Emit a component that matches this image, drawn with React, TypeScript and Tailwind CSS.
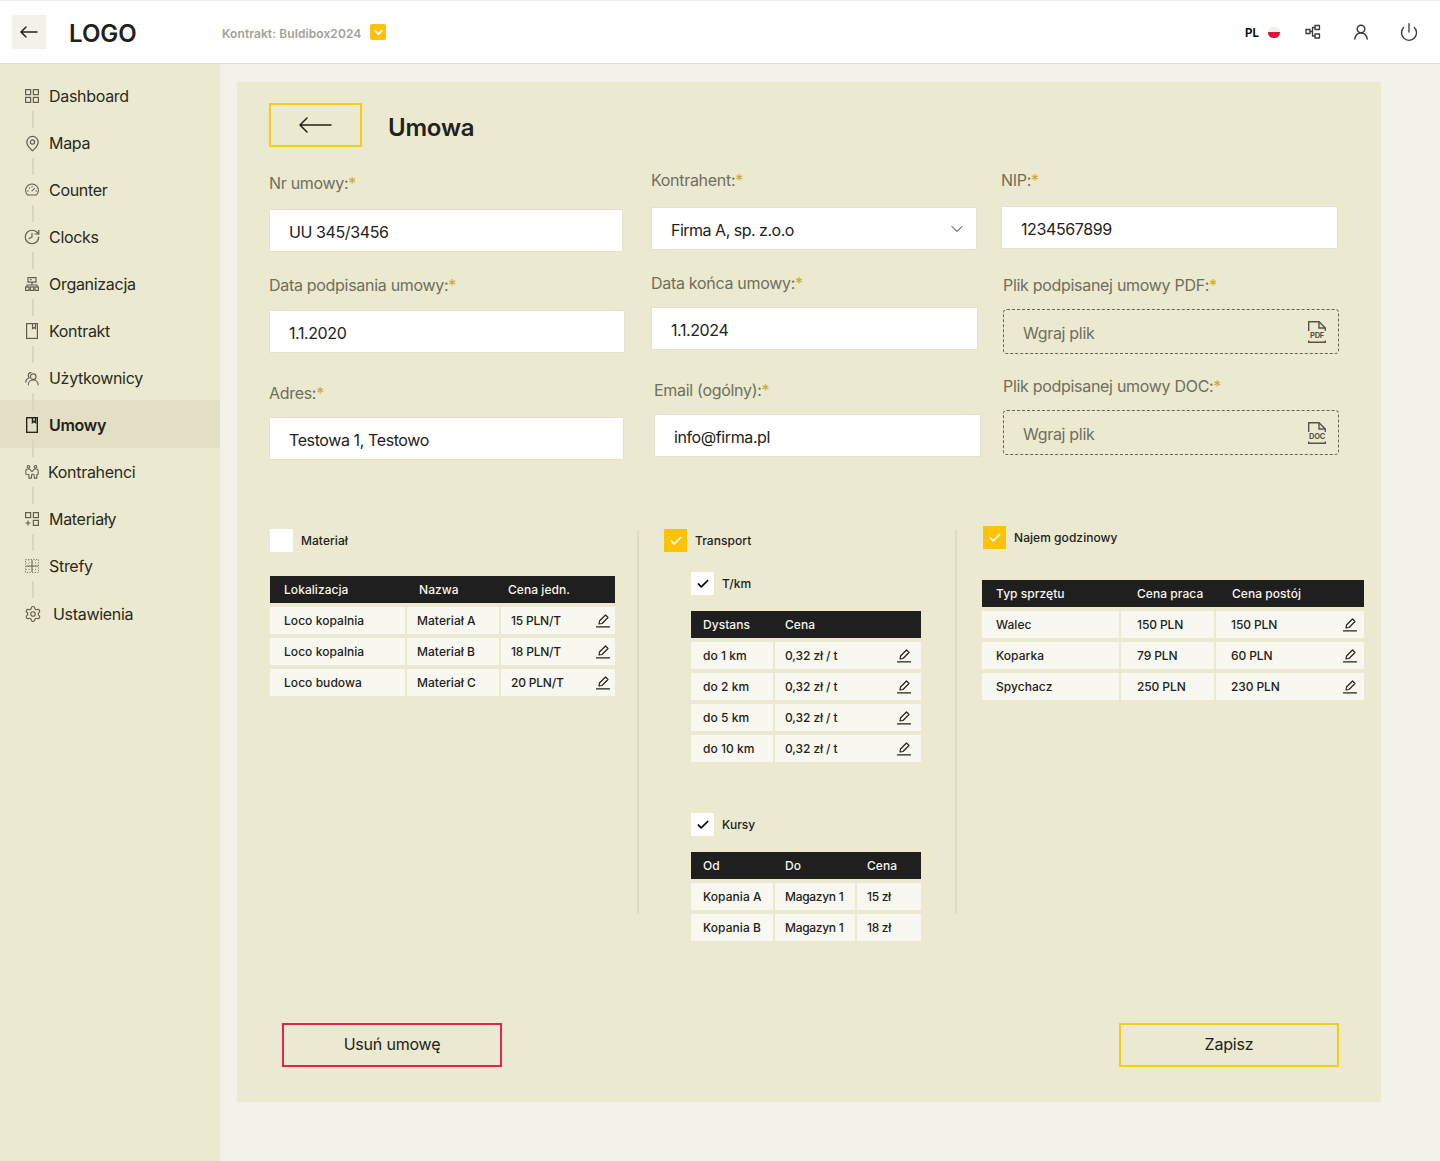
import { ChevronDown, Check, MapPin, History, Settings, Power } from "lucide-react";
import type { ReactNode } from "react";

const iconProps = {
  fill: "none",
  stroke: "currentColor",
  strokeWidth: 1.2,
  strokeLinecap: "round" as const,
  strokeLinejoin: "round" as const,
};

function DashIcon() {
  return (
    <svg width="14" height="14" viewBox="0 0 14 14" {...iconProps} strokeLinecap="butt" strokeLinejoin="miter">
      <rect x="0.6" y="0.6" width="5" height="5" />
      <rect x="8.4" y="0.6" width="5" height="5" />
      <rect x="0.6" y="8.4" width="5" height="5" />
      <rect x="8.4" y="8.4" width="5" height="5" />
    </svg>
  );
}

function GaugeIcon() {
  return (
    <svg width="16" height="14" viewBox="0 0 16 14" {...iconProps}>
      <path d="M3 12.800A7.300 7.300 0 1 1 13 12.800Z" />
      <path d="M8 8l3-3M3 8h.5M12.500 8h.5M5 4.500l.3.3M8 3v.5" />
    </svg>
  );
}

function OrgIcon() {
  return (
    <svg width="14" height="14" viewBox="0 0 14 14" {...iconProps} strokeLinecap="butt" strokeLinejoin="miter">
      <rect x="3" y="0.6" width="8" height="4.500" />
      <path d="M5 2.600h1.500M7 5v3M2 10V8h10v2" />
      <rect x="0.6" y="10" width="3.400" height="3.400" />
      <rect x="5.300" y="10" width="3.400" height="3.400" />
      <rect x="10" y="10" width="3.400" height="3.400" />
    </svg>
  );
}

function BookIcon({ bold = false }: { bold?: boolean }) {
  return (
    <svg width="12" height="16" viewBox="0 0 12 16" {...iconProps} strokeWidth={bold ? 1.500 : 1.200} strokeLinecap="butt" strokeLinejoin="miter">
      <rect x="0.6" y="0.6" width="10.800" height="14.800" />
      <path d="M6.500 0.6V5.500L8 4.400 9.500 5.500V0.6" />
    </svg>
  );
}

function UsersIcon() {
  return (
    <svg width="15" height="15" viewBox="0 0 15 15" {...iconProps}>
      <circle cx="8.800" cy="5.500" r="3" />
      <path d="M3.500 14.300c0-3 2.200-5.300 5.300-5.300s5.300 2.300 5.300 5.300" />
      <path d="M6.500 1.200A3 3 0 0 0 3.500 4.200c0 1 .4 1.800 1 2.400C2.500 7.500.8 9.500.8 11.500" />
    </svg>
  );
}

function PartnersIcon() {
  return (
    <svg width="16" height="16" viewBox="0 0 16 16" {...iconProps}>
      <circle cx="4" cy="2" r="1.500" />
      <circle cx="12" cy="2" r="1.500" />
      <path d="M1 6c0-.9.6-1.500 2-1.500h2l3 3 3-3h2c1.400 0 2 .6 2 1.500v4.500l-1.500.4V15h-2.800l-.4-4L8 10.200 7.700 11l-.4 4H4.500v-4.100L1 10.500Z" />
    </svg>
  );
}

function MaterialsIcon() {
  return (
    <svg width="14" height="14" viewBox="0 0 14 14" {...iconProps} strokeLinecap="butt" strokeLinejoin="miter">
      <rect x="0.6" y="0.6" width="5" height="5" />
      <rect x="8.400" y="0.6" width="5" height="5" />
      <rect x="8.400" y="8.400" width="5" height="5" />
      <path d="M3 8.400v5M0.500 11h5" />
    </svg>
  );
}

function ZonesIcon() {
  return (
    <svg width="14" height="14" viewBox="0 0 14 14" fill="none" stroke="currentColor" strokeWidth="1">
      <rect x="0.5" y="0.5" width="13" height="13" strokeDasharray="1.300 1.300" opacity="0.75" />
      <path d="M7 1v12M1 7h12" />
      <path d="M3.500 1v12M10.500 1v12M1 3.500h12M1 10.500h12" strokeDasharray="1 2" opacity="0.45" />
    </svg>
  );
}

function NetIcon() {
  return (
    <svg width="16" height="16" viewBox="0 0 16 16" {...iconProps} strokeWidth={1.300}>
      <rect x="1" y="5.500" width="4" height="4" />
      <rect x="10" y="1.500" width="4.500" height="4" />
      <rect x="10" y="10" width="4.500" height="4" />
      <path d="M5 7.500h2.500M7.500 3.500V12M7.500 3.500H10M7.500 12H10" />
    </svg>
  );
}

function UserIcon() {
  return (
    <svg width="16" height="16" viewBox="0 0 16 16" {...iconProps} strokeWidth={1.500}>
      <circle cx="8" cy="5" r="3.800" />
      <path d="M1.800 15c.5-3.500 3-6 6.200-6s5.700 2.500 6.200 6" />
    </svg>
  );
}

function PencilIcon() {
  return (
    <svg width="14" height="14" viewBox="0 0 14 14" {...iconProps} strokeWidth={1.200}>
      <path d="M3 10l.5-3L9.500 1l2.500 2.500-6 6Z" />
      <path d="M0.500 12.800h13" />
    </svg>
  );
}

function FileTypeIcon({ label }: { label: string }) {
  return (
    <svg width="18" height="22" viewBox="0 0 18 22" fill="none" stroke="#54544a" strokeWidth="1.400">
      <path d="M0.700 10V0.700H11L17.300 7V10" />
      <path d="M11 0.700V7H17.300" />
      <path d="M0.700 19.500V21.300H17.300V19.500" />
      <text x="9" y="16.500" textAnchor="middle" fontSize="7.500" fontWeight="700" fill="#54544a" stroke="none">
        {label}
      </text>
    </svg>
  );
}

function Connector() {
  return <div className="relative z-10 ml-[32px] h-[17px] w-[2px] bg-[#d8d6bd]" />;
}

function NavItem({ icon, label, textCls = "ml-[10px]" }: { icon: ReactNode; label: string; textCls?: string }) {
  return (
    <div className="flex h-[30px] items-center pl-[25px] text-[16px] leading-none tracking-[-0.3px] text-[#2a2a22]">
      <span className="flex w-[14px] shrink-0 items-center justify-center text-[#5f5f50]">{icon}</span>
      <span className={textCls}>{label}</span>
    </div>
  );
}

function Sidebar() {
  return (
    <aside className="w-[220px] shrink-0 bg-[#ebe9d0] pt-[17px]">
      <NavItem icon={<DashIcon />} label="Dashboard" />
      <Connector />
      <NavItem icon={<MapPin size={17} strokeWidth={1.700} className="shrink-0" />} label="Mapa" />
      <Connector />
      <NavItem icon={<GaugeIcon />} label="Counter" />
      <Connector />
      <NavItem icon={<History size={18} strokeWidth={1.600} className="shrink-0 -scale-x-100" />} label="Clocks" />
      <Connector />
      <NavItem icon={<OrgIcon />} label="Organizacja" />
      <Connector />
      <NavItem icon={<BookIcon />} label="Kontrakt" />
      <Connector />
      <NavItem icon={<UsersIcon />} label="Użytkownicy" />
      <Connector />
      <div className="-mt-[10px] -mb-[8px] flex h-[48px] items-center bg-[#e2dfc5] pt-[2px] pl-[26px] text-[16px] leading-none font-semibold tracking-[-0.3px] text-[#22221b]">
        <span className="flex w-[12px] justify-center text-[#22221b]">
          <BookIcon bold />
        </span>
        <span className="ml-[11px]">Umowy</span>
      </div>
      <Connector />
      <NavItem icon={<PartnersIcon />} label="Kontrahenci" textCls="ml-[9px]" />
      <Connector />
      <NavItem icon={<MaterialsIcon />} label="Materiały" />
      <Connector />
      <NavItem icon={<ZonesIcon />} label="Strefy" />
      <Connector />
      <div className="mt-[1px] flex h-[30px] items-center pl-[25px] text-[16px] leading-none tracking-[-0.3px] text-[#2a2a22]">
        <span className="flex w-[16px] justify-center text-[#5f5f50]">
          <Settings size={18} strokeWidth={1.500} className="shrink-0" />
        </span>
        <span className="ml-[12px]">Ustawienia</span>
      </div>
    </aside>
  );
}

function TopBar() {
  return (
    <header className="flex h-[64px] items-center border-t border-b border-t-[#f0f0ea] border-b-[#dededa] bg-white pl-[12px]">
      <div className="flex h-[34px] w-[34px] items-center justify-center bg-[#f2f2ea] text-[#22221b]">
        <svg width="18" height="12" viewBox="0 0 18 12" {...iconProps} strokeWidth={1.500}>
          <path d="M17 6H1M6 1 1 6l5 5" />
        </svg>
      </div>
      <div className="ml-[23px] w-[153px] pt-[3px] text-[24px] leading-none font-semibold text-[#22221b]">LOGO</div>
      <div className="pt-[3px] text-[12px] leading-none font-semibold tracking-[0.09px] text-[#a3a296]">Kontrakt: Buldibox2024</div>
      <div className="ml-[9px] flex h-[16px] w-[16px] items-center justify-center rounded-[2px] bg-[#ffc20a] text-white">
        <ChevronDown size={13} strokeWidth={3.500} />
      </div>
      <div className="ml-auto flex items-center pr-[21px] text-[#3a3a3a]">
        <span className="pt-[3px] text-[11.500px] leading-none font-bold text-[#111]">PL</span>
        <div className="ml-[9px] h-[11px] w-[12px] overflow-hidden rounded-full bg-[#eeeeea]">
          <div className="mt-[5px] h-[6px] bg-[#dc143c]" />
        </div>
        <span className="ml-[25px] flex">
          <NetIcon />
        </span>
        <span className="ml-[32px] flex">
          <UserIcon />
        </span>
        <span className="ml-[30px] flex">
          <Power size={20} strokeWidth={1.600} />
        </span>
      </div>
    </header>
  );
}

function Label({ text, className = "" }: { text: string; className?: string }) {
  return (
    <div className={`h-[24px] text-[16px] leading-[24px] tracking-[-0.3px] text-[#6f6f5d] ${className}`}>
      {text}
      <span className="text-[#c9a92a]">*</span>
    </div>
  );
}

function TextBox({ value, className = "" }: { value: string; className?: string }) {
  return (
    <input
      readOnly
      value={value}
      className={`block h-[43px] border border-[#e4e2cf] bg-white px-[19px] pt-[2px] text-[16px] tracking-[-0.4px] text-[#22221b] outline-none ${className}`}
    />
  );
}

function Upload({ kind, className = "" }: { kind: string; className?: string }) {
  return (
    <div
      className={`flex h-[45px] w-[336px] items-center justify-between rounded-[4px] border border-dashed border-[#66665a] pr-[12px] pl-[19px] text-[16px] tracking-[-0.3px] text-[#6f6f5d] ${className}`}
    >
      <span className="pt-[2px]">Wgraj plik</span>
      <FileTypeIcon label={kind} />
    </div>
  );
}

type Cell = { text: string; cls?: string };

function DataTable({
  gridCls,
  head,
  rows,
  editCls = "",
}: {
  gridCls: string;
  head: Cell[];
  rows: Cell[][];
  editCls?: string;
}) {
  return (
    <div className="flex flex-col gap-[4px] text-[12px] leading-none font-medium tracking-[0.05px] text-[#22221b]">
      <div className={`grid h-[27px] items-center bg-[#1f1f1f] pt-[1px] text-[#f7f6ee] ${gridCls}`}>
        {head.map((c) => (
          <div key={c.text} className={c.cls}>
            {c.text}
          </div>
        ))}
      </div>
      {rows.map((row) => (
        <div key={row.map((c) => c.text).join("-")} className={`grid h-[27px] ${gridCls}`}>
          {row.map((c, i) => (
            <div key={i} className={`flex items-center justify-between bg-[#f9f8f0] ${c.cls ?? ""}`}>
              <span className="pt-[1px]">{c.text}</span>
              {i === row.length - 1 && editCls && (
                <span className={`flex ${editCls}`}>
                  <PencilIcon />
                </span>
              )}
            </div>
          ))}
        </div>
      ))}
    </div>
  );
}

function CheckBox({ state, label, className = "" }: { state: "off" | "yellow" | "white"; label: string; className?: string }) {
  return (
    <div className={`flex items-center gap-[8px] text-[12px] leading-none font-medium tracking-[0.05px] text-[#22221b] ${className}`}>
      {state === "yellow" && (
        <div className="flex h-[23px] w-[23px] items-center justify-center bg-[#ffc20a] text-white">
          <Check size={14} strokeWidth={3} />
        </div>
      )}
      {state === "white" && (
        <div className="flex h-[23px] w-[23px] items-center justify-center bg-white text-black">
          <Check size={14} strokeWidth={3} />
        </div>
      )}
      {state === "off" && <div className="h-[23px] w-[23px] bg-white" />}
      <span className="pt-[1px]">{label}</span>
    </div>
  );
}

const Divider = () => <div className="mt-[4px] h-[384px] w-[2px] shrink-0 bg-[#dedcc3]" />;

export default function App() {
  return (
    <div className="flex min-h-[1161px] flex-col bg-[#f2f2ea] font-[Inter,sans-serif]">
      <TopBar />
      <div className="flex flex-1">
        <Sidebar />
        <main className="pt-[18px] pl-[17px]">
          <div className="w-[1144px] bg-[#ebe9d0] pt-[21px] pr-[32px] pb-[35px] pl-[32px]">
            <div className="flex items-center">
              <div className="flex h-[44px] w-[93px] items-center justify-center border-2 border-[#f5cc16] text-[#22221b]">
                <svg width="33" height="16" viewBox="0 0 33 16" {...iconProps} strokeWidth={1.500} className="-ml-[1px]">
                  <path d="M32 8H1M8 1 1 8l7 7" />
                </svg>
              </div>
              <h1 className="ml-[26px] pt-[5px] text-[24px] leading-none font-semibold tracking-[-0.2px] text-[#22221b]">Umowa</h1>
            </div>

            <div className="flex">
              <div className="w-[382px]">
                <Label text="Nr umowy:" className="mt-[24px]" />
                <TextBox value="UU 345/3456" className="mt-[14px] w-[354px]" />
                <Label text="Data podpisania umowy:" className="mt-[21px]" />
                <TextBox value="1.1.2020" className="mt-[13px] w-[356px]" />
                <Label text="Adres:" className="mt-[28px]" />
                <TextBox value="Testowa 1, Testowo" className="mt-[12px] w-[355px]" />
              </div>
              <div className="w-[350px]">
                <Label text="Kontrahent:" className="mt-[21px]" />
                <div className="mt-[15px] flex h-[43px] w-[326px] items-center justify-between border border-[#e4e2cf] bg-white pr-[9px] pl-[19px] text-[16px] tracking-[-0.5px] text-[#22221b]">
                  <span className="pt-[2px]">Firma A, sp. z.o.o</span>
                  <ChevronDown size={20} strokeWidth={1.200} />
                </div>
                <Label text="Data końca umowy:" className="mt-[21px]" />
                <TextBox value="1.1.2024" className="mt-[12px] w-[327px]" />
                <Label text="Email (ogólny):" className="mt-[28px] ml-[3px]" />
                <TextBox value="info@firma.pl" className="mt-[12px] ml-[3px] w-[327px]" />
              </div>
              <div>
                <Label text="NIP:" className="mt-[21px]" />
                <TextBox value="1234567899" className="mt-[14px] w-[337px]" />
                <Label text="Plik podpisanej umowy PDF:" className="mt-[24px] ml-[2px]" />
                <Upload kind="PDF" className="mt-[12px] ml-[2px]" />
                <Label text="Plik podpisanej umowy DOC:" className="mt-[20px] ml-[2px]" />
                <Upload kind="DOC" className="mt-[12px] ml-[2px]" />
              </div>
            </div>

            <div className="mt-[66px] flex items-start">
              <div className="w-[368px] shrink-0 pt-[3px] pl-[1px]">
                <CheckBox state="off" label="Materiał" />
                <div className="mt-[24px] w-[345px]">
                  <DataTable
                    gridCls="grid-cols-[135px_92px_114px] gap-x-[2px]"
                    editCls="mr-[5px]"
                    head={[
                      { text: "Lokalizacja", cls: "pl-[14px]" },
                      { text: "Nazwa", cls: "pl-[12px]" },
                      { text: "Cena jedn.", cls: "pl-[7px]" },
                    ]}
                    rows={[
                      [
                        { text: "Loco kopalnia", cls: "pl-[14px]" },
                        { text: "Materiał A", cls: "pl-[10px]" },
                        { text: "15 PLN/T", cls: "pl-[10px] tracking-[-0.2px]" },
                      ],
                      [
                        { text: "Loco kopalnia", cls: "pl-[14px]" },
                        { text: "Materiał B", cls: "pl-[10px]" },
                        { text: "18 PLN/T", cls: "pl-[10px] tracking-[-0.2px]" },
                      ],
                      [
                        { text: "Loco budowa", cls: "pl-[14px]" },
                        { text: "Materiał C", cls: "pl-[10px]" },
                        { text: "20 PLN/T", cls: "pl-[10px] tracking-[-0.2px]" },
                      ],
                    ]}
                  />
                </div>
              </div>
              <Divider />
              <div className="w-[316px] shrink-0 pt-[3px] pl-[25px]">
                <CheckBox state="yellow" label="Transport" />
                <div className="ml-[27px] w-[230px]">
                  <CheckBox state="white" label="T/km" className="mt-[20px]" />
                  <div className="mt-[16px]">
                    <DataTable
                      gridCls="grid-cols-[82px_146px] gap-x-[2px]"
                      editCls="mr-[10px]"
                      head={[
                        { text: "Dystans", cls: "pl-[12px]" },
                        { text: "Cena", cls: "pl-[10px]" },
                      ]}
                      rows={["do 1 km", "do 2 km", "do 5 km", "do 10 km"].map((d) => [
                        { text: d, cls: "pl-[12px]" },
                        { text: "0,32 zł / t", cls: "pl-[10px] tracking-[-0.1px]" },
                      ])}
                    />
                  </div>
                  <CheckBox state="white" label="Kursy" className="mt-[51px]" />
                  <div className="mt-[16px]">
                    <DataTable
                      gridCls="grid-cols-[82px_80px_64px] gap-x-[2px]"
                      head={[
                        { text: "Od", cls: "pl-[12px]" },
                        { text: "Do", cls: "pl-[10px]" },
                        { text: "Cena", cls: "pl-[10px]" },
                      ]}
                      rows={[
                        [
                          { text: "Kopania A", cls: "pl-[12px]" },
                          { text: "Magazyn 1", cls: "pl-[10px] tracking-[-0.3px]" },
                          { text: "15 zł", cls: "pl-[10px] tracking-[-0.3px]" },
                        ],
                        [
                          { text: "Kopania B", cls: "pl-[12px]" },
                          { text: "Magazyn 1", cls: "pl-[10px] tracking-[-0.3px]" },
                          { text: "18 zł", cls: "pl-[10px] tracking-[-0.3px]" },
                        ],
                      ]}
                    />
                  </div>
                </div>
              </div>
              <Divider />
              <div className="ml-[25px] w-[382px] shrink-0">
                <CheckBox state="yellow" label="Najem godzinowy" className="ml-[1px] tracking-[-0.1px]" />
                <div className="mt-[31px]">
                  <DataTable
                    gridCls="grid-cols-[137px_93px_148px] gap-x-[2px]"
                    editCls="mr-[7px]"
                    head={[
                      { text: "Typ sprzętu", cls: "pl-[14px]" },
                      { text: "Cena praca", cls: "pl-[16px]" },
                      { text: "Cena postój", cls: "pl-[16px]" },
                    ]}
                    rows={[
                      [
                        { text: "Walec", cls: "pl-[14px]" },
                        { text: "150 PLN", cls: "pl-[16px] tracking-[-0.1px]" },
                        { text: "150 PLN", cls: "pl-[15px] tracking-[-0.1px]" },
                      ],
                      [
                        { text: "Koparka", cls: "pl-[14px]" },
                        { text: "79 PLN", cls: "pl-[16px] tracking-[-0.1px]" },
                        { text: "60 PLN", cls: "pl-[15px] tracking-[-0.1px]" },
                      ],
                      [
                        { text: "Spychacz", cls: "pl-[14px]" },
                        { text: "250 PLN", cls: "pl-[16px] tracking-[-0.1px]" },
                        { text: "230 PLN", cls: "pl-[15px] tracking-[-0.1px]" },
                      ],
                    ]}
                  />
                </div>
              </div>
            </div>

            <div className="mt-[82px] mr-[10px] ml-[13px] flex justify-between text-[16px] tracking-[-0.2px] text-[#22221b]">
              <button className="h-[44px] w-[220px] border-2 border-[#e0244f] pb-[2px]">Usuń umowę</button>
              <button className="h-[44px] w-[220px] border-2 border-[#f5cc16] pb-[2px]">Zapisz</button>
            </div>
          </div>
        </main>
      </div>
    </div>
  );
}
